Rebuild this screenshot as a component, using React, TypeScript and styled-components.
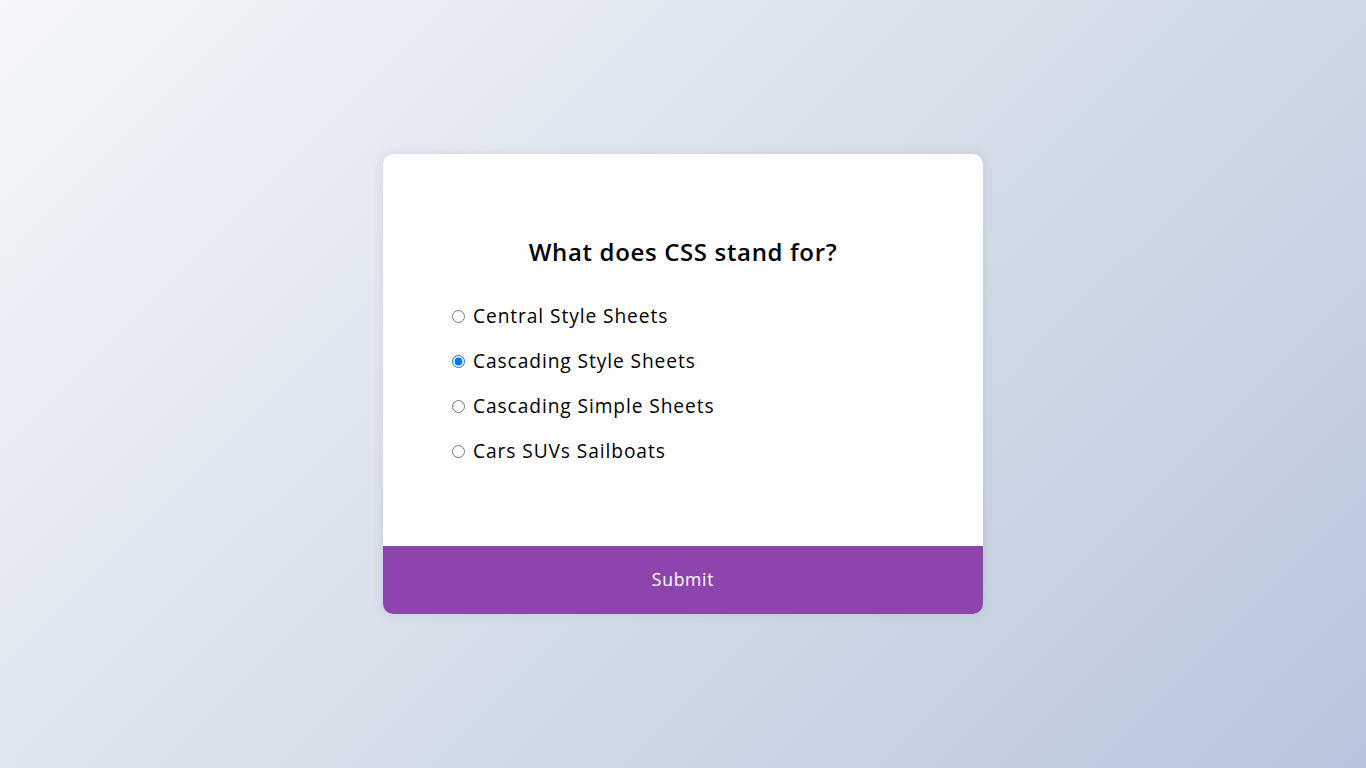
import React from "react";
import styled, { createGlobalStyle } from "styled-components";

const GlobalStyle = createGlobalStyle`
  * { box-sizing: border-box; }
  html, body { margin: 0; padding: 0; }
  body {
    background-color: #b8c6db;
    background-image: linear-gradient(315deg, #b8c6db 0%, #f5f7fa 100%);
    font-family: "Open Sans", "Noto Sans", sans-serif;
    height: 100vh;
    overflow: hidden;
  }
`;

const Page = styled.div`
  display: flex;
  align-items: center;
  justify-content: center;
  height: 100vh;
`;

const Card = styled.div`
  background-color: #fff;
  border-radius: 10px;
  box-shadow: 0 0 10px 2px rgba(100, 100, 100, 0.1);
  width: 600px;
  overflow: hidden;
`;

const Header = styled.div`
  padding: 64px;
`;

const Question = styled.h2`
  margin: 0;
  padding: 16px;
  text-align: center;
  font-size: 24px;
  font-weight: 600;
  line-height: 36px;
  color: #000;
  letter-spacing: 0.65px;
`;

const Options = styled.ul`
  list-style: none;
  padding: 0;
  margin: 16px 0;
`;

const Option = styled.li`
  font-size: 19.2px;
  line-height: 28.8px;
  margin: 16px 0;
  color: #000;
  display: flex;
  align-items: center;
  letter-spacing: 0.9px;
`;

const Radio = styled.input`
  margin: 0 8px 0 5px;
  width: 13px;
  height: 13px;
`;

const Label = styled.label`
  cursor: pointer;
`;

const SubmitButton = styled.button`
  background-color: #8e44ad;
  color: #fff;
  border: none;
  display: block;
  width: 100%;
  cursor: pointer;
  font-family: inherit;
  font-size: 17.6px;
  line-height: 26.4px;
  letter-spacing: 0.7px;
  padding: 20.8px;
`;

const answers = [
  { id: "a", text: "Central Style Sheets" },
  { id: "b", text: "Cascading Style Sheets" },
  { id: "c", text: "Cascading Simple Sheets" },
  { id: "d", text: "Cars SUVs Sailboats" },
];

export default function App() {
  const [selected, setSelected] = React.useState("b");
  return (
    <>
      <GlobalStyle />
      <Page>
        <Card>
          <Header>
            <Question>What does CSS stand for?</Question>
            <Options>
              {answers.map((a) => (
                <Option key={a.id}>
                  <Radio
                    type="radio"
                    name="answer"
                    id={a.id}
                    checked={selected === a.id}
                    onChange={() => setSelected(a.id)}
                  />
                  <Label htmlFor={a.id}>{a.text}</Label>
                </Option>
              ))}
            </Options>
          </Header>
          <SubmitButton>Submit</SubmitButton>
        </Card>
      </Page>
    </>
  );
}
